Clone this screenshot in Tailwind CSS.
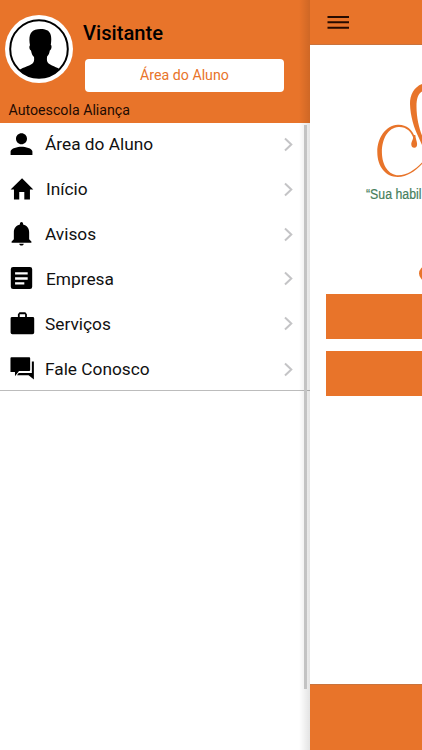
<!DOCTYPE html>
<html lang="pt-BR">
<head>
<meta charset="utf-8">
<title>Autoescola Aliança</title>
<script src="https://cdn.jsdelivr.net/npm/@tailwindcss/browser@4"></script>
</head>
<body class="w-[422px] h-[750px] overflow-hidden bg-white text-black font-[Roboto,sans-serif]">
<div class="relative flex w-[422px] h-[750px] overflow-hidden">
  <aside class="w-[310px] shrink-0 h-full flex flex-col">
    <header class="h-[122.5px] shrink-0 bg-[#e8742a] flex flex-col">
      <div class="flex h-[98px]">
        <div class="mt-[15px] ml-[5px] size-[68px] shrink-0 rounded-full bg-white">
          <svg class="size-full" viewBox="0 0 68 68">
            <defs><clipPath id="face"><circle cx="34" cy="34" r="29"/></clipPath></defs>
            <path clip-path="url(#face)" d="M12 57c4-4.500 12-5.500 15.500-8.500 2-2 1.700-4 1.500-6.500-1.700-1.500-2.600-4-3-6.500-1.600-.5-2.200-4-1-5.200-1-5-.9-10 1.500-13 2.500-3.500 11-4.300 15.500-2 4.500 2 4.800 8 3.800 14.500 1.500 1 .5 5-1 5.700-.3 2.500-1.200 4.500-2.700 6-.3 3-.5 5 1.500 7 4 3 10.500 4 14.500 8.500v12H12z"/>
            <circle cx="34" cy="34" r="28.800" fill="none" stroke="#000" stroke-width="2"/>
          </svg>
        </div>
        <div class="ml-[10px] pt-[19px] flex flex-col">
          <h1 class="text-[20.200px] leading-[28px] font-medium">Visitante</h1>
          <button class="ml-[2px] mt-[12px] w-[199px] h-[33px] rounded-[4px] bg-white text-[#e8742a] text-[14.200px] leading-[31px] pb-px">Área do Aluno</button>
        </div>
      </div>
      <p class="pl-[8.500px] pt-[4px] text-[14.200px] leading-[17px] text-[#1e0b02]">Autoescola Aliança</p>
    </header>
    <nav class="h-[268.500px] shrink-0 pt-[.5px] grid auto-rows-[44.850px] border-b border-[#bcbcbc] text-[17.300px] text-[#111]">
      <a class="flex items-center pl-[8px] pr-[15px]"><svg class="size-[27px] shrink-0 mb-[2px]" viewBox="0 0 24 24"><path d="M12 11.800c2.700 0 4.900-2.200 4.900-4.900S14.700 2 12 2 7.100 4.200 7.100 6.900s2.200 4.900 4.900 4.900zm0 2.200c-3.300 0-9.700 1.300-9.700 4.300v3h19.400v-3c0-3-6.400-4.300-9.700-4.300z"/></svg><span class="ml-[10px] grow">Área do Aluno</span><svg class="w-[13px] h-[17px] mb-px" viewBox="0 0 13 17" fill="none" stroke="#c4c4c6" stroke-width="2"><path d="m3 2.500 6.300 6L3 14.500"/></svg></a>
      <a class="flex items-center pl-[8px] pr-[15px]"><svg class="size-[27px] shrink-0 mb-[2px]" viewBox="0 0 24 24"><path d="M10 20.800v-6.500h4.500v6.500h5V12h3L12.500 2 2.300 12h3v8.800z"/></svg><span class="ml-[11px] grow">Início</span><svg class="w-[13px] h-[17px] mb-px" viewBox="0 0 13 17" fill="none" stroke="#c4c4c6" stroke-width="2"><path d="m3 2.500 6.300 6L3 14.500"/></svg></a>
      <a class="flex items-center pl-[8px] pr-[15px]"><svg class="size-[27px] shrink-0 mb-[2px]" viewBox="0 0 24 24"><path d="M12 21.800c1.100 0 2-.7 2-1.600h-4c0 .9.900 1.600 2 1.600zm6.800-5.500V10c0-3.500-2-6-5.400-6.800V2.300a1.400 1.400 0 0 0-2.800 0v.9C7.200 4 5.200 6.500 5.200 10v6.300l-2 2v1h17.600v-1z"/></svg><span class="ml-[10px] grow">Avisos</span><svg class="w-[13px] h-[17px] mb-px" viewBox="0 0 13 17" fill="none" stroke="#c4c4c6" stroke-width="2"><path d="m3 2.500 6.300 6L3 14.500"/></svg></a>
      <a class="flex items-center pl-[8px] pr-[15px]"><svg class="size-[27px] shrink-0 mb-[2px]" viewBox="0 0 24 24"><path d="M19.500 1.800h-15A2 2 0 0 0 2.500 3.800v15.500a2 2 0 0 0 2 2h15a2 2 0 0 0 2-2V3.800a2 2 0 0 0-2-2zM14.500 17.300H6.300v-2h8.200zm3-4.300H6.300v-2.100h11.200zm0-4.500H6.300V6.400h11.200z"/></svg><span class="ml-[11px] grow">Empresa</span><svg class="w-[13px] h-[17px] mb-[2px]" viewBox="0 0 13 17" fill="none" stroke="#c4c4c6" stroke-width="2"><path d="m3 2.500 6.300 6L3 14.500"/></svg></a>
      <a class="flex items-center pl-[8px] pr-[15px]"><svg class="size-[27px] shrink-0 mb-px" viewBox="0 0 24 24"><path d="M22 5.300h-5.200V2.800l-1.400-1.700h-5.200L8.800 2.800v2.500H3.600a1.300 1.300 0 0 0-1.300 1.300V19a1.600 1.600 0 0 0 1.600 1.600h17.800a1.600 1.600 0 0 0 1.600-1.600V6.600A1.300 1.300 0 0 0 22 5.300zm-6.800 0h-4.800V2.800h4.800z"/></svg><span class="ml-[10px] grow">Serviços</span><svg class="w-[13px] h-[17px] mb-[2px]" viewBox="0 0 13 17" fill="none" stroke="#c4c4c6" stroke-width="2"><path d="m3 2.500 6.300 6L3 14.500"/></svg></a>
      <a class="flex items-center pl-[8px] pr-[15px]"><svg class="size-[27px] shrink-0" viewBox="0 0 24 24"><path d="M23 4.800h-1.800v10.300H9.500L8 17.200h10.300l4.700 3.600zM19.700 12.500V2a.8.800 0 0 0-.8-.8H3a.8.800 0 0 0-.8.800v12.300h4v3.600l3.600-4.600h9.100a.8.800 0 0 0 .8-.8z"/></svg><span class="ml-[10px] grow">Fale Conosco</span><svg class="w-[13px] h-[17px] mb-px" viewBox="0 0 13 17" fill="none" stroke="#c4c4c6" stroke-width="2"><path d="m3 2.500 6.300 6L3 14.500"/></svg></a>
    </nav>
  </aside>
  <div class="absolute left-[299px] top-0 w-[11px] h-full bg-linear-to-r from-black/0 to-black/11"></div>
  <div class="absolute left-[303.500px] top-[125px] w-[3.500px] h-[564px] bg-[#c3c3c3]"></div>
  <main class="w-[112px] shrink-0 h-full flex flex-col bg-white">
    <header class="h-[45px] shrink-0 bg-[#e8742a] border-b border-[#c9733d] pl-[17px] pt-[16px]">
      <svg class="w-[23px] h-[14px]" viewBox="0 0 23 14" stroke="#260b00" stroke-width="2"><path d="M.5 1h21.500M.5 6.300h21.500M.5 11.800h21.500"/></svg>
    </header>
    <section class="grow flex flex-col pl-[16px] overflow-hidden">
      <svg class="w-[96px] h-[139px] shrink-0" viewBox="326 45 96 139" fill="#e8742a">
        <path d="M422 84c-8 3-12.200 11-12 20 .3 12 4 24 8.700 33.500l3.300 7.500v-9.500c-3-8-5.500-18-5.500-29 0-8 1.500-12.500 5.500-15z"/>
        <path d="M415 138c-2-8.500-9.300-13.700-17.300-13.200-12 .7-20.500 13-20.400 27.500.1 14.500 8.500 24.700 20.500 24.700 9 0 17-5.500 24.200-13v-1.500c-7.500 7.500-15 12.700-23.500 12.700-9.500 0-16.500-9.500-16.600-23 0-13.500 6.200-24.500 16.500-25.200 7.500-.5 13.300 4.500 15.300 12z"/>
        <path d="M413.400 135c0 5-2.200 6.500-2.100 9.500.1 2.200 1.400 3.300 3 3.200 1.900-.1 2.900-1.500 2.800-3.700-.1-2.500-1.500-5-1.800-9z"/>
      </svg>
      <p class="ml-[39.500px] mt-px w-[65px] shrink-0 h-[18px] text-[#46805c] text-[14px] leading-[18px] whitespace-nowrap font-['Liberation_Sans',Arial,sans-serif] origin-left scale-x-[.88] [-webkit-text-stroke:.2px]">“Sua habil</p>
      <div class="h-[91.400px] shrink-0 flex justify-end items-end pb-[12px]"><div class="w-[3px] h-[17px] overflow-hidden"><div class="mt-px size-[15px] rounded-full bg-[#e8742a]"></div></div></div>
      <div class="h-[45px] shrink-0 bg-[#e8742a]"></div>
      <div class="mt-[12px] h-[45px] shrink-0 bg-[#e8742a]"></div>
    </section>
    <footer class="h-[66px] shrink-0 bg-[#e8742a] border-t border-[#c9733d]"></footer>
  </main>
</div>
</body>
</html>
